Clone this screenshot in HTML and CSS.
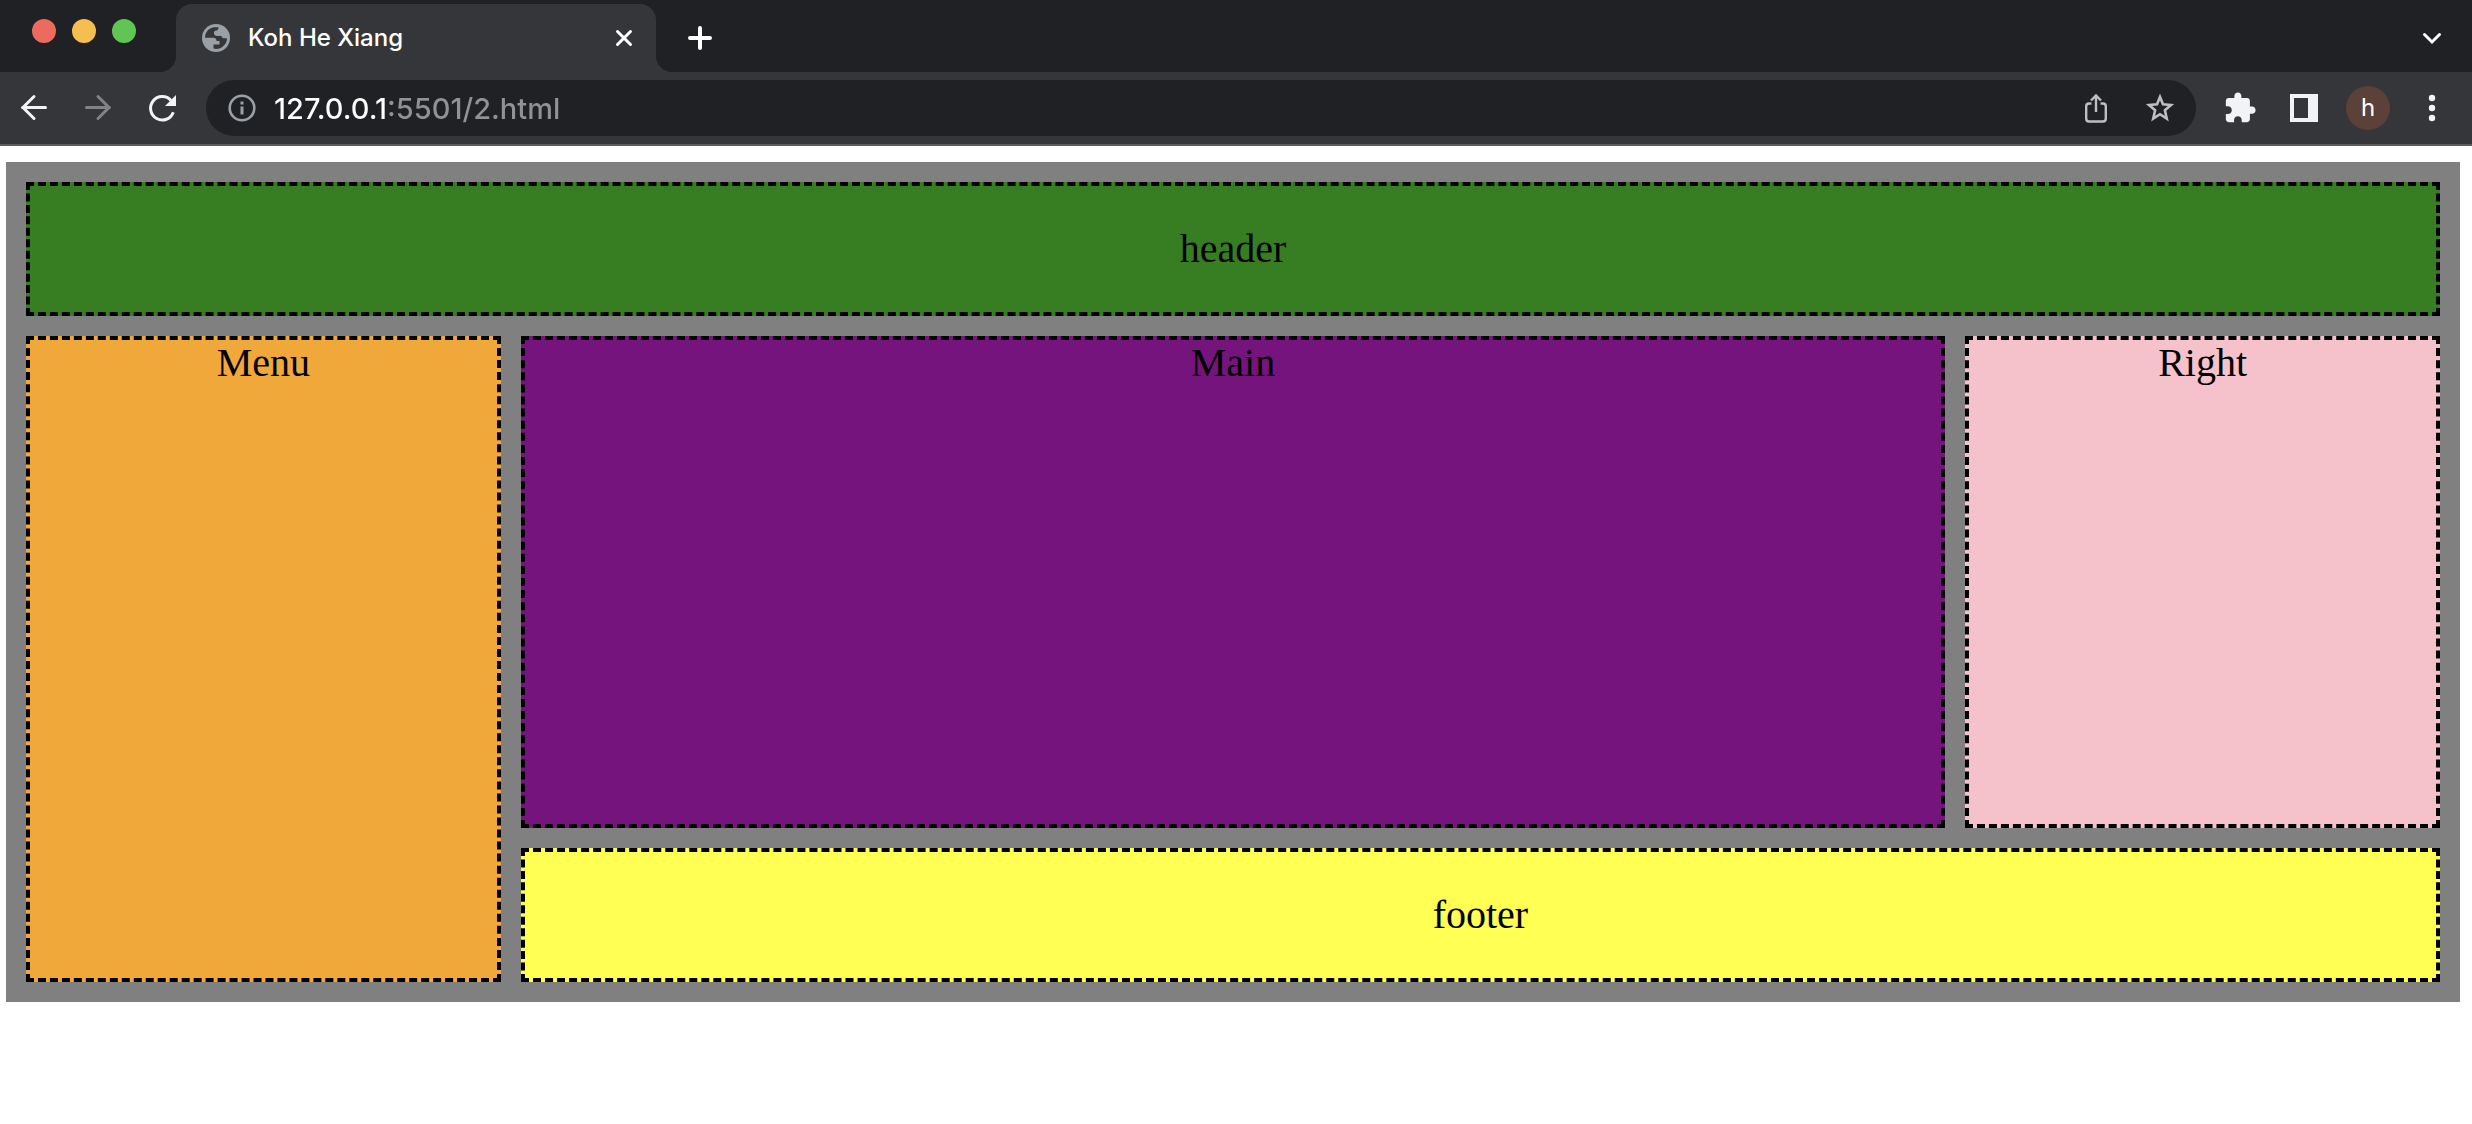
FILE: index.html
```html
<!DOCTYPE html>
<html lang="en">
<head>
<meta charset="utf-8">
<title>Koh He Xiang</title>
<link rel="stylesheet" href="styles.css">
</head>
<body>
<div class="browser">
  <div class="tab-strip">
    <div class="lights">
      <button class="light light-close" aria-label="Close window"></button>
      <button class="light light-min" aria-label="Minimize window"></button>
      <button class="light light-max" aria-label="Zoom window"></button>
    </div>
    <div class="tab">
      <svg class="icon globe" width="32" height="32" viewBox="0 0 32 32" aria-hidden="true">
        <circle cx="16" cy="16" r="14" fill="#9aa0a6"/>
        <path d="M14 5.2 C8.5 6 5 10.5 5 15.8 L13.5 15.8 Q16.5 16 16.5 19 L19.5 19 L19.5 22.5 L13.5 22.5 L13.5 26.6 C20 28.4 27 23 27 16.2 L23.5 16.2 Q22 16.2 21.5 14 L17.5 14 Q13.5 14 14 10.6 Q14.3 8.3 17.5 8.3 L18.8 5.2 Z" fill="#35363a"/>
      </svg>
      <span class="tab-title">Koh He Xiang</span>
      <button class="icon-button tab-close" aria-label="Close tab">
        <svg class="icon" width="32" height="32" viewBox="0 0 32 32"><path d="M9.5 9.5 22.5 22.5M22.5 9.5 9.5 22.5" stroke="#fff" stroke-width="3" stroke-linecap="round"/></svg>
      </button>
    </div>
    <button class="icon-button new-tab" aria-label="New tab">
      <svg class="icon" width="32" height="32" viewBox="0 0 32 32"><path d="M16 6V26M6 16H26" stroke="#fff" stroke-width="4" stroke-linecap="round"/></svg>
    </button>
    <button class="icon-button tab-search" aria-label="Search tabs">
      <svg class="icon" width="32" height="32" viewBox="0 0 32 32"><path d="M8.5 12.5 16 20 23.5 12.5" fill="none" stroke="#fff" stroke-width="3" stroke-linecap="round"/></svg>
    </button>
  </div>

  <div class="toolbar">
    <button class="icon-button" aria-label="Back">
      <svg class="icon" width="32" height="32" viewBox="0 0 32 32"><path d="M27.500 15.500H4.500M16 4.500 5 15.500 16 26.500" fill="none" stroke="#f1f3f4" stroke-width="3" stroke-linecap="round"/></svg>
    </button>
    <button class="icon-button" aria-label="Forward" disabled>
      <svg class="icon" width="32" height="32" viewBox="0 0 32 32"><path d="M4.500 15.500H27.500M16 4.500 27 15.500 16 26.500" fill="none" stroke="#828386" stroke-width="3" stroke-linecap="round"/></svg>
    </button>
    <button class="icon-button" aria-label="Reload">
      <svg class="icon" width="32" height="32" viewBox="0 0 32 32"><path d="M27.3 20.2A11.7 11.7 0 1 1 25 8.5" fill="none" stroke="#f1f3f4" stroke-width="3"/><path d="M30 3V14H19Z" fill="#f1f3f4"/></svg>
    </button>
    <div class="omnibox">
      <svg class="icon" width="32" height="32" viewBox="0 0 32 32" aria-hidden="true"><circle cx="16" cy="16" r="12.3" fill="none" stroke="#9aa0a6" stroke-width="2.6"/><path d="M16 9.500V12.500M16 14.500V22.500" stroke="#9aa0a6" stroke-width="3"/></svg>
      <input class="address" type="text" aria-label="Address" value="127.0.0.1:5501/2.html" spellcheck="false">
      <button class="icon-button" aria-label="Share">
        <svg class="icon" width="32" height="32" viewBox="0 0 32 32"><path d="M11.500 11.500H9Q6.200 11.500 6.200 14.300V26.500Q6.200 29.500 9 29.500H23Q25.800 29.500 25.800 26.500V14.300Q25.800 11.500 23 11.500H20.500M16 20V4M11 8.500 16 3.500 21 8.500" fill="none" stroke="#bdbfc1" stroke-width="2.4"/></svg>
      </button>
      <button class="icon-button" aria-label="Bookmark this tab">
        <svg class="icon" width="32" height="32" viewBox="0 0 32 32"><path d="M16 5 19 12.300 27 13 20.900 18.200 22.800 26.600 16 22.200 9.200 26.600 11.100 18.200 5 13 13 12.300Z" fill="none" stroke="#bdbfc1" stroke-width="2.6"/></svg>
      </button>
    </div>
    <button class="icon-button" aria-label="Extensions">
      <svg class="icon" width="34" height="34" viewBox="0 0 24 24"><path d="M20.500 11H19V7c0-1.100-.9-2-2-2h-4V3.500C13 2.120 11.880 1 10.500 1S8 2.120 8 3.500V5H4c-1.100 0-1.990.9-1.990 2v3.800H3.500c1.490 0 2.700 1.210 2.700 2.700s-1.210 2.700-2.700 2.700H2V20c0 1.100.9 2 2 2h3.800v-1.500c0-1.490 1.210-2.700 2.700-2.700 1.490 0 2.700 1.210 2.700 2.700V22H17c1.100 0 2-.9 2-2v-4h1.500c1.380 0 2.500-1.120 2.500-2.500S21.880 11 20.500 11z" fill="#f1f3f4"/></svg>
    </button>
    <button class="icon-button" aria-label="Side panel">
      <svg class="icon" width="32" height="32" viewBox="0 0 32 32"><path d="M2 2H30V30H2ZM6 6V26H20V6Z" fill="#f1f3f4" fill-rule="evenodd"/></svg>
    </button>
    <button class="icon-button" aria-label="Profile"><span class="avatar">h</span></button>
    <button class="icon-button" aria-label="Menu">
      <svg class="icon" width="32" height="32" viewBox="0 0 32 32" fill="#f1f3f4"><circle cx="16" cy="6" r="3.2"/><circle cx="16" cy="16" r="3.2"/><circle cx="16" cy="26" r="3.2"/></svg>
    </button>
  </div>
</div>

<div class="layout">
  <header class="box header"><p class="label">header</p></header>
  <nav class="box menu">Menu</nav>
  <main class="box main">Main</main>
  <aside class="box right">Right</aside>
  <footer class="box footer"><p class="label">footer</p></footer>
</div>
</body>
</html>
```
FILE: styles.css
```css
* { box-sizing: border-box; }

body {
  margin: 0;
  background: #fff;
  font-family: "Liberation Serif", "Times New Roman", serif;
}

/* Browser frame */
.browser {
  background: #202124;
  border-bottom: 2px solid #5c5b60;
  font-family: Inter, sans-serif;
  color: #fff;
}

.icon { display: block; flex: none; }

.icon-button {
  display: flex;
  align-items: center;
  justify-content: center;
  flex: none;
  width: 64px;
  height: 56px;
  padding: 0;
  border: 0;
  background: none;
  color: #fff;
  font: inherit;
}

.tab-strip {
  display: flex;
  height: 72px;
  padding: 4px 8px 0 32px;
}

.lights {
  display: flex;
  gap: 16px;
  margin: 15px 40px 0 0;
}

.light {
  width: 24px;
  height: 24px;
  padding: 0;
  border: 0;
  border-radius: 50%;
}
.light-close { background: #ed6a5e; }
.light-min { background: #f5bf4f; }
.light-max { background: #61c554; }

.tab {
  position: relative;
  display: flex;
  align-items: center;
  gap: 16px;
  width: 480px;
  height: 68px;
  padding: 0 16px 0 24px;
  border-radius: 16px 16px 0 0;
  background: #35363a;
}

/* Curved feet that join the tab to the toolbar */
.tab::before,
.tab::after {
  content: "";
  position: absolute;
  bottom: 0;
  width: 16px;
  height: 16px;
}
.tab::before {
  right: 100%;
  background: radial-gradient(circle at 0 0, transparent 16px, #35363a 16px);
}
.tab::after {
  left: 100%;
  background: radial-gradient(circle at 100% 0, transparent 16px, #35363a 16px);
}

.tab-title {
  flex: 1;
  font-size: 24px;
  font-weight: 500;
  line-height: 32px;
}
.tab-close { width: 32px; }
.new-tab { width: 56px; margin-left: 16px; height: 68px; }
.tab-search { margin-left: auto; height: 68px; }

.toolbar {
  display: flex;
  align-items: center;
  height: 72px;
  padding: 0 8px 0 2px;
  background: #35363a;
}

.omnibox {
  display: flex;
  flex: 1;
  align-items: center;
  height: 56px;
  min-width: 0;
  margin: 0 12px;
  padding: 0 4px 0 20px;
  border-radius: 28px;
  background: #202124;
}

/* The host is white, the port and the path are grey */
.address {
  flex: 1;
  min-width: 0;
  height: 40px;
  margin: 0 0 0 16px;
  padding: 0;
  border: 0;
  outline: 0;
  background: linear-gradient(to right, #fff 115px, #919294 115px);
  background-clip: text;
  -webkit-background-clip: text;
  color: transparent;
  caret-color: #fff;
  font-family: inherit;
  font-size: 29px;
  font-weight: 500;
}

.avatar {
  width: 44px;
  border-radius: 50%;
  background: #5c4138;
  font-size: 24px;
  line-height: 44px;
  text-align: center;
}

/* Page content */
.layout {
  display: grid;
  grid-template-columns: 1fr 3fr 1fr;
  grid-template-rows: auto minmax(492px, auto) auto;
  grid-template-areas:
    "header header header"
    "menu main right"
    "menu footer footer";
  gap: 20px;
  margin: 16px 12px 16px 6px;
  padding: 20px;
  background: #808080;
  color: #000;
  font-size: 40px;
  line-height: 46px;
  text-align: center;
}

.box { border: 4px dashed #000; }
.label { margin: 40px 0; }

.header { grid-area: header; background: #377e22; }
.menu { grid-area: menu; background: #f1a83b; }
.main { grid-area: main; background: #75147c; }
.right { grid-area: right; background: #f5c2cb; }
.footer { grid-area: footer; background: #ffff54; }
```
